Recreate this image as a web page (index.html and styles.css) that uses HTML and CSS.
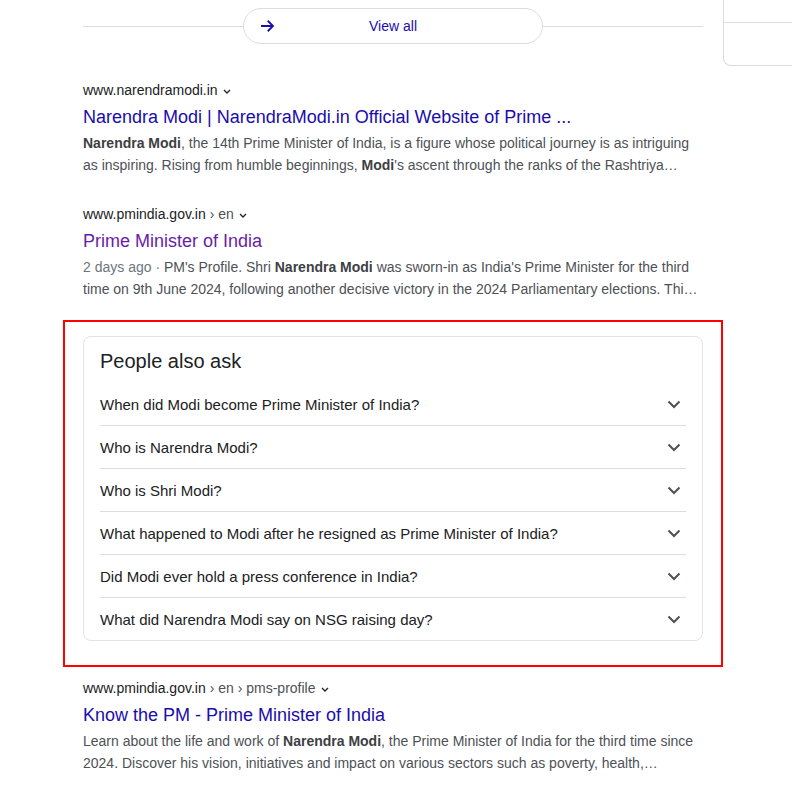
FILE: index.html
```html
<html>
<head>
    <title>Narendra Modi - Search</title>
    <link rel="stylesheet" href="styles.css">
</head>
<body>
<div class="page">
    <div class="main">
        <div class="viewall-row">
            <div class="rule"></div>
            <div class="viewall">
                <svg class="arrow" width="18" height="18" viewBox="0 0 24 24"><path d="M4 12h15M13 5l7 7-7 7" fill="none" stroke="#1a0dab" stroke-width="2.4"/></svg>
                <span>View all</span>
            </div>
            <div class="rule"></div>
        </div>

        <div class="result">
            <div class="url">www.narendramodi.in <svg class="caret" width="10" height="10" viewBox="0 0 10 10"><path d="M2 4l3 3 3-3" fill="none" stroke="#202124" stroke-width="1.3"/></svg></div>
            <div class="title">Narendra Modi | NarendraModi.in Official Website of Prime ...</div>
            <div class="snippet"><b>Narendra Modi</b>, the 14th Prime Minister of India, is a figure whose political journey is as intriguing as inspiring. Rising from humble beginnings, <b>Modi</b>'s ascent through the ranks of the Rashtriya…</div>
        </div>

        <div class="result">
            <div class="url">www.pmindia.gov.in <span class="crumb">› en</span> <svg class="caret" width="10" height="10" viewBox="0 0 10 10"><path d="M2 4l3 3 3-3" fill="none" stroke="#202124" stroke-width="1.3"/></svg></div>
            <div class="title visited">Prime Minister of India</div>
            <div class="snippet"><span class="date">2 days ago · </span>PM's Profile. Shri <b>Narendra Modi</b> was sworn-in as India's Prime Minister for the third time on 9th June 2024, following another decisive victory in the 2024 Parliamentary elections. Thi…</div>
        </div>

        <div class="highlight">
            <div class="paa">
                <div class="paa-head">People also ask</div>
                <div class="question"><span>When did Modi become Prime Minister of India?</span><svg class="chev" width="16" height="16" viewBox="0 0 16 16"><path d="M2.5 5.5l5.5 5.5 5.5-5.5" fill="none" stroke="#4d5156" stroke-width="2"/></svg></div>
                <div class="question"><span>Who is Narendra Modi?</span><svg class="chev" width="16" height="16" viewBox="0 0 16 16"><path d="M2.5 5.5l5.5 5.5 5.5-5.5" fill="none" stroke="#4d5156" stroke-width="2"/></svg></div>
                <div class="question"><span>Who is Shri Modi?</span><svg class="chev" width="16" height="16" viewBox="0 0 16 16"><path d="M2.5 5.5l5.5 5.5 5.5-5.5" fill="none" stroke="#4d5156" stroke-width="2"/></svg></div>
                <div class="question"><span>What happened to Modi after he resigned as Prime Minister of India?</span><svg class="chev" width="16" height="16" viewBox="0 0 16 16"><path d="M2.5 5.5l5.5 5.5 5.5-5.5" fill="none" stroke="#4d5156" stroke-width="2"/></svg></div>
                <div class="question"><span>Did Modi ever hold a press conference in India?</span><svg class="chev" width="16" height="16" viewBox="0 0 16 16"><path d="M2.5 5.5l5.5 5.5 5.5-5.5" fill="none" stroke="#4d5156" stroke-width="2"/></svg></div>
                <div class="question"><span>What did Narendra Modi say on NSG raising day?</span><svg class="chev" width="16" height="16" viewBox="0 0 16 16"><path d="M2.5 5.5l5.5 5.5 5.5-5.5" fill="none" stroke="#4d5156" stroke-width="2"/></svg></div>
            </div>
        </div>

        <div class="result last">
            <div class="url">www.pmindia.gov.in <span class="crumb">› en › pms-profile</span> <svg class="caret" width="10" height="10" viewBox="0 0 10 10"><path d="M2 4l3 3 3-3" fill="none" stroke="#202124" stroke-width="1.3"/></svg></div>
            <div class="title">Know the PM - Prime Minister of India</div>
            <div class="snippet">Learn about the life and work of <b>Narendra Modi</b>, the Prime Minister of India for the third time since 2024. Discover his vision, initiatives and impact on various sectors such as poverty, health,…</div>
        </div>
    </div>

    <div class="side">
        <div class="side-top"></div>
    </div>
</div>
</body>
</html>
```

FILE: styles.css
```css
*{
    margin: 0;
    padding: 0;
    box-sizing: border-box;
}
body{
    font-family: 'Liberation Sans', Arial, sans-serif;
    background: #fff;
    color: #202124;
    overflow: hidden;
}
.page{
    display: flex;
    gap: 20px;
    padding-left: 83px;
}
.main{
    width: 620px;
    flex-shrink: 0;
}
.viewall-row{
    display: flex;
    align-items: center;
    margin-top: 8px;
}
.rule{
    flex: 1;
    height: 1px;
    background: #dadce0;
}
.viewall{
    width: 300px;
    height: 36px;
    border: 1px solid #dadce0;
    border-radius: 18px;
    display: flex;
    align-items: center;
    color: #1a0dab;
    font-size: 14px;
}
.viewall .arrow{
    margin-left: 14px;
}
.viewall span{
    flex: 1;
    text-align: center;
    margin-right: 32px;
}
.result{
    margin-top: 35px;
}
.result + .result{
    margin-top: 27px;
}
.url{
    font-size: 14px;
    line-height: 22px;
    color: #202124;
    display: flex;
    align-items: center;
    gap: 4px;
}
.url .crumb{
    color: #4d5156;
}
.url .caret{
    margin-top: 2px;
}
.title{
    font-size: 18px;
    line-height: 26px;
    padding-top: 3px;
    color: #1a0dab;
}
.title.visited{
    color: #681da8;
}
.snippet{
    margin-top: 2px;
    font-size: 14px;
    line-height: 22px;
    color: #4d5156;
}
.snippet b{
    color: #3c4043;
}
.snippet .date{
    color: #70757a;
}
.highlight{
    margin: 20px -20px 0;
    border: 2px solid #f00;
    padding: 14px 18px 24px;
}
.paa{
    border: 1px solid #e3e3e3;
    border-radius: 8px;
    padding: 11px 16px 0;
}
.paa-head{
    font-size: 20px;
    line-height: 26px;
    color: #202124;
    margin-bottom: 9px;
}
.question{
    display: flex;
    align-items: center;
    justify-content: space-between;
    height: 43px;
    border-bottom: 1px solid #dadce0;
    font-size: 15px;
    color: #202124;
    padding-right: 4px;
}
.question:last-child{
    border-bottom: 0;
    height: 42px;
}
.result.last{
    margin-top: 10px;
}
.side{
    flex: 1;
}
.side-top{
    margin-top: -20px;
    height: 86px;
    border: 1px solid #dadce0;
    border-right: 0;
    border-radius: 0 0 0 8px;
    position: relative;
}
.side-top::after{
    content: '';
    position: absolute;
    left: 0;
    right: 0;
    top: 41px;
    height: 1px;
    background: #dadce0;
}
```
